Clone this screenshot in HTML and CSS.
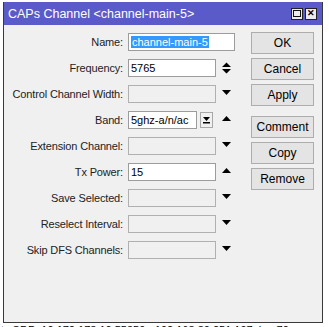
FILE: index.html
```html
<!DOCTYPE html>
<html lang="en">
<head>
<meta charset="utf-8">
<title>CAPs Channel</title>
<link rel="stylesheet" href="styles.css">
</head>
<body>
<div class="desk">
  <div class="win">
    <div class="titlebar">
      <span class="title">CAPs Channel &lt;channel-main-5&gt;</span>
      <span class="tbtns">
        <span class="tbtn"><span class="maxbox"></span></span>
        <span class="tbtn close">&#x2715;</span>
      </span>
    </div>
    <div class="winbody">
      <div class="fields">
        <div class="row">
          <label>Name:</label>
          <div class="input wide"><span class="sel">channel-main-5</span></div>
        </div>
        <div class="row">
          <label>Frequency:</label>
          <div class="input">5765</div>
          <svg class="arrow" width="9" height="12" viewBox="0 0 9 12"><path d="M0 5 L4.5 0.5 L9 5 Z M0 7 L9 7 L4.5 11.5 Z" fill="#000"/></svg>
        </div>
        <div class="row">
          <label>Control Channel Width:</label>
          <div class="input off"></div>
          <svg class="arrow down" width="9" height="5" viewBox="0 0 9 5"><path d="M0 0 L9 0 L4.5 5 Z" fill="#000"/></svg>
        </div>
        <div class="row">
          <label>Band:</label>
          <div class="input band">5ghz-a/n/ac</div>
          <span class="mini">
            <svg width="7" height="8" viewBox="0 0 7 8"><path d="M0 1 L7 1 L3.5 5 Z" fill="#000"/><rect x="0" y="6" width="7" height="1.5" fill="#000"/></svg>
          </span>
          <svg class="arrow up" width="9" height="5" viewBox="0 0 9 5"><path d="M0 5 L4.5 0 L9 5 Z" fill="#000"/></svg>
        </div>
        <div class="row">
          <label>Extension Channel:</label>
          <div class="input off"></div>
          <svg class="arrow down" width="9" height="5" viewBox="0 0 9 5"><path d="M0 0 L9 0 L4.5 5 Z" fill="#000"/></svg>
        </div>
        <div class="row">
          <label>Tx Power:</label>
          <div class="input">15</div>
          <svg class="arrow up" width="9" height="5" viewBox="0 0 9 5"><path d="M0 5 L4.5 0 L9 5 Z" fill="#000"/></svg>
        </div>
        <div class="row">
          <label>Save Selected:</label>
          <div class="input off"></div>
          <svg class="arrow down" width="9" height="5" viewBox="0 0 9 5"><path d="M0 0 L9 0 L4.5 5 Z" fill="#000"/></svg>
        </div>
        <div class="row">
          <label>Reselect Interval:</label>
          <div class="input off"></div>
          <svg class="arrow down" width="9" height="5" viewBox="0 0 9 5"><path d="M0 0 L9 0 L4.5 5 Z" fill="#000"/></svg>
        </div>
        <div class="row">
          <label>Skip DFS Channels:</label>
          <div class="input off"></div>
          <svg class="arrow down" width="9" height="5" viewBox="0 0 9 5"><path d="M0 0 L9 0 L4.5 5 Z" fill="#000"/></svg>
        </div>
      </div>
      <div class="buttons">
        <button class="btn">OK</button>
        <button class="btn">Cancel</button>
        <button class="btn">Apply</button>
        <button class="btn spaced">Comment</button>
        <button class="btn">Copy</button>
        <button class="btn">Remove</button>
      </div>
    </div>
  </div>
  <div class="log">tc SDP: 10.172.178.10:55350 &gt;192.168.80.251:197, len 70</div>
</div>
</body>
</html>
```

FILE: styles.css
```css
body
        {
        margin:0;
        background:#fff;
        font-family:"Liberation Sans", Arial, sans-serif;
        font-size:11px;
        color:#000;
        height:327px;
        overflow:hidden;
        }
.desk
        {
        width:329px;
        }
.win
        {
        margin:2px 0 0 3px;
        width:320px;
        height:321px;
        box-sizing:border-box;
        border:1px solid #3a3a3a;
        border-top:none;
        background:#f0f0f0;
        display:flex;
        flex-direction:column;
        }
.titlebar
        {
        height:23px;
        background:#5a5ac8;
        display:flex;
        align-items:center;
        padding:0 5px 0 4px;
        }
.title
        {
        color:#fff;
        font-size:12.5px;
        flex:1;
        }
.tbtns
        {
        display:flex;
        gap:2px;
        }
.tbtn
        {
        width:12px;
        height:12px;
        box-sizing:border-box;
        border:1px solid #222;
        background:#ececec;
        display:flex;
        align-items:center;
        justify-content:center;
        }
.maxbox
        {
        width:6px;
        height:5px;
        border:1px solid #111;
        }
.close
        {
        font-size:9px;
        font-weight:bold;
        line-height:1;
        }
.winbody
        {
        display:flex;
        padding-top:8px;
        }
.fields
        {
        width:231px;
        display:flex;
        flex-direction:column;
        gap:8px;
        }
.row
        {
        display:flex;
        align-items:center;
        height:18px;
        }
label
        {
        width:119px;
        margin-right:5px;
        text-align:right;
        color:#222;
        letter-spacing:-0.15px;
        }
.input
        {
        width:88px;
        height:18px;
        box-sizing:border-box;
        border:1px solid #9c9c9c;
        background:#fff;
        padding-left:2px;
        line-height:16px;
        white-space:nowrap;
        overflow:hidden;
        }
.input.off
        {
        background:#f0f0f0;
        border-color:#b0b0b0;
        }
.input.wide
        {
        width:107px;
        }
.input.band
        {
        width:69px;
        }
.sel
        {
        background:#3399ff;
        color:#fff;
        padding:0 1px;
        }
.mini
        {
        width:13px;
        height:16px;
        margin-left:3px;
        box-sizing:border-box;
        border:1px solid #a8a8a8;
        background:#f0f0f0;
        display:flex;
        align-items:center;
        justify-content:center;
        }
.arrow
        {
        margin-left:6px;
        }
.mini + .arrow
        {
        margin-left:9px;
        }
.arrow.down,
.arrow.up
        {
        margin-top:-3px;
        }
.buttons
        {
        margin:-1px 0 0 16px;
        width:63px;
        display:flex;
        flex-direction:column;
        gap:4px;
        }
.btn
        {
        height:22px;
        margin:0;
        padding:0;
        border:1px solid #adadad;
        background:#e4e4e4;
        font-family:"Liberation Sans", Arial, sans-serif;
        font-size:12px;
        color:#000;
        }
.btn.spaced
        {
        margin-top:6px;
        }
.log
        {
        margin-top:1px;
        font-size:11px;
        line-height:12px;
        white-space:nowrap;
        padding-left:1px;
        }
```
